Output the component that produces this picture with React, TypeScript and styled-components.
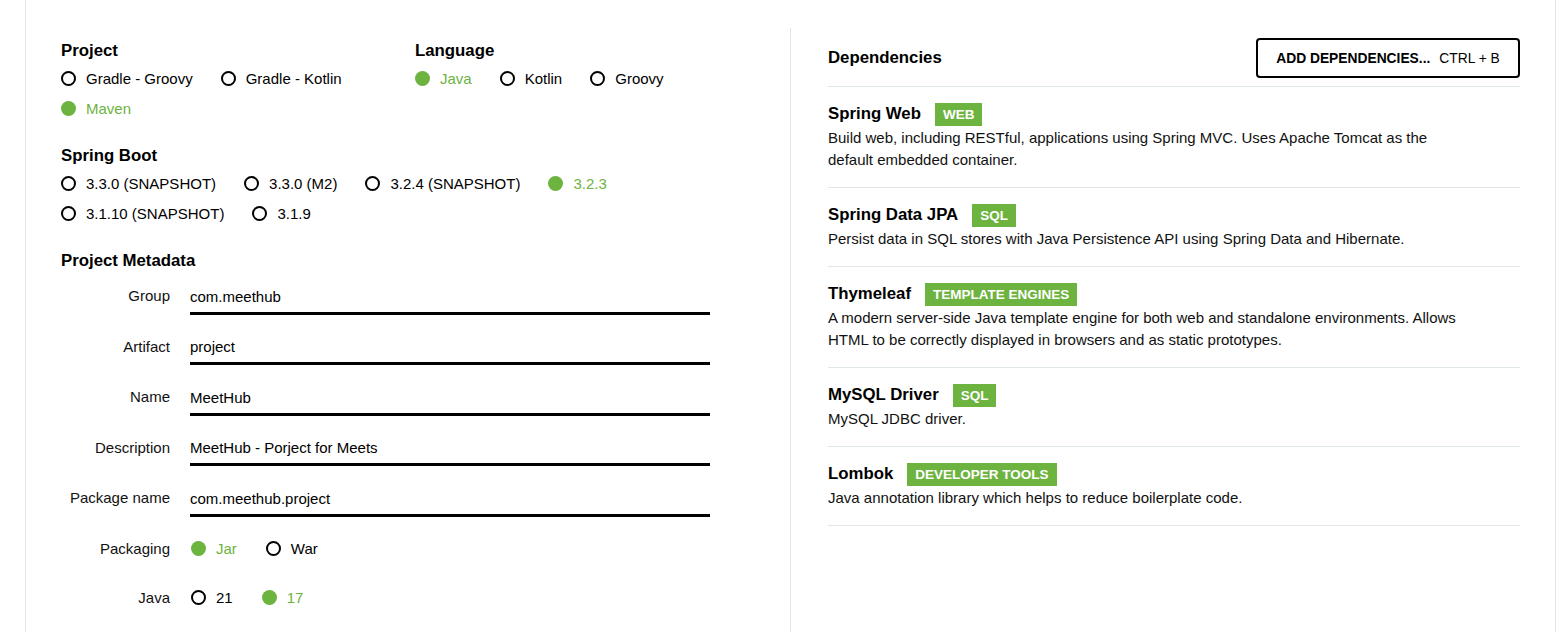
import React from 'react'
import styled, { createGlobalStyle } from 'styled-components'

const GREEN = '#6db33f'
const LINE = '#dfe7e8'

const GlobalStyle = createGlobalStyle`
    body {
        margin: 0;
        background: #fff;
        color: #000;
        font-family: "Liberation Sans", Arial, sans-serif;
    }
`

type Opt = { label: string; checked?: boolean }

const Radio: React.FC<Opt> = ({ label, checked }) => (
    <Option $checked={!!checked}>
        <Dot $checked={!!checked} />
        {label}
    </Option>
)

const RadioGroup: React.FC<{ options: Opt[] }> = ({ options }) => (
    <Options>
        {options.map(o => <Radio key={o.label} {...o} />)}
    </Options>
)

const deps = [
    { name: 'Spring Web', tag: 'WEB', text: 'Build web, including RESTful, applications using Spring MVC. Uses Apache Tomcat as the default embedded container.' },
    { name: 'Spring Data JPA', tag: 'SQL', text: 'Persist data in SQL stores with Java Persistence API using Spring Data and Hibernate.' },
    { name: 'Thymeleaf', tag: 'TEMPLATE ENGINES', text: 'A modern server-side Java template engine for both web and standalone environments. Allows HTML to be correctly displayed in browsers and as static prototypes.' },
    { name: 'MySQL Driver', tag: 'SQL', text: 'MySQL JDBC driver.' },
    { name: 'Lombok', tag: 'DEVELOPER TOOLS', text: 'Java annotation library which helps to reduce boilerplate code.' },
]

const fields = [
    ['Group', 'com.meethub'],
    ['Artifact', 'project'],
    ['Name', 'MeetHub'],
    ['Description', 'MeetHub - Porject for Meets'],
    ['Package name', 'com.meethub.project'],
]

const App: React.FC = () => {
    return (
        <>
            <GlobalStyle />
            <Page>
                <Columns>
                    <LeftCol>
                        <TopRow>
                            <ProjectBlock>
                                <Heading>Project</Heading>
                                <RadioGroup options={[
                                    { label: 'Gradle - Groovy' },
                                    { label: 'Gradle - Kotlin' },
                                    { label: 'Maven', checked: true },
                                ]} />
                            </ProjectBlock>
                            <LanguageBlock>
                                <Heading>Language</Heading>
                                <RadioGroup options={[
                                    { label: 'Java', checked: true },
                                    { label: 'Kotlin' },
                                    { label: 'Groovy' },
                                ]} />
                            </LanguageBlock>
                        </TopRow>

                        <Section>
                            <Heading>Spring Boot</Heading>
                            <RadioGroup options={[
                                { label: '3.3.0 (SNAPSHOT)' },
                                { label: '3.3.0 (M2)' },
                                { label: '3.2.4 (SNAPSHOT)' },
                                { label: '3.2.3', checked: true },
                                { label: '3.1.10 (SNAPSHOT)' },
                                { label: '3.1.9' },
                            ]} />
                        </Section>

                        <Section>
                            <Heading $gap={9}>Project Metadata</Heading>
                            <MetaGrid>
                                {fields.map(([label, value]) => (
                                    <React.Fragment key={label}>
                                        <FieldLabel>{label}</FieldLabel>
                                        <TextInput defaultValue={value} />
                                    </React.Fragment>
                                ))}
                                <FieldLabel $center>Packaging</FieldLabel>
                                <InlineOptions>
                                    <Radio label="Jar" checked />
                                    <Radio label="War" />
                                </InlineOptions>
                                <FieldLabel $center>Java</FieldLabel>
                                <InlineOptions>
                                    <Radio label="21" />
                                    <Radio label="17" checked />
                                </InlineOptions>
                            </MetaGrid>
                        </Section>
                    </LeftCol>

                    <RightCol>
                        <DepsHeader>
                            <Heading $gap={0}>Dependencies</Heading>
                            <AddButton>
                                <strong>ADD DEPENDENCIES...</strong>
                                <span>CTRL + B</span>
                            </AddButton>
                        </DepsHeader>
                        {deps.map(d => (
                            <DepItem key={d.name}>
                                <DepTitle>
                                    {d.name}
                                    <Badge>{d.tag}</Badge>
                                </DepTitle>
                                <DepText>{d.text}</DepText>
                            </DepItem>
                        ))}
                    </RightCol>
                </Columns>
            </Page>
        </>
    )
}

const Page = styled.div`
    margin-left: 25px;
    min-height: 100vh;
    box-sizing: border-box;
    padding-top: 28px;
    border-left: 1px solid ${LINE};
    border-right: 1px solid ${LINE};
`

const Columns = styled.div`
    display: grid;
    grid-template-columns: 764px 1fr;
    min-height: calc(100vh - 28px);
`

const LeftCol = styled.div`
    padding: 13px 0 0 35px;
    width: 649px;
`

const RightCol = styled.div`
    border-left: 1px solid ${LINE};
    padding: 10px 35px 0 37px;
`

const TopRow = styled.div`
    display: flex;
`

const ProjectBlock = styled.div`
    flex: 0 0 354px;
`

const LanguageBlock = styled.div`
    flex: 1;
`

const Section = styled.div`
    margin-top: 23px;
`

const Heading = styled.div<{ $gap?: number }>`
    font-size: 16.8px;
    font-weight: bold;
    line-height: 20px;
    margin-bottom: ${p => (p.$gap ?? 2)}px;
`

const Options = styled.div`
    display: flex;
    flex-wrap: wrap;
    column-gap: 28px;
`

const InlineOptions = styled.div`
    display: flex;
    column-gap: 29px;
    height: 32px;
    margin-top: 1px;
    padding-left: 1px;
`

const Option = styled.label<{ $checked: boolean }>`
    display: flex;
    align-items: center;
    height: 30px;
    font-size: 15px;
    color: ${p => (p.$checked ? GREEN : '#000')};
    cursor: pointer;
`

const Dot = styled.span<{ $checked: boolean }>`
    width: 15px;
    height: 15px;
    box-sizing: border-box;
    border-radius: 50%;
    margin-right: 10px;
    border: ${p => (p.$checked ? 'none' : '2px solid #000')};
    background: ${p => (p.$checked ? GREEN : '#fff')};
`

const MetaGrid = styled.div`
    display: grid;
    grid-template-columns: 109px 520px;
    column-gap: 20px;
    row-gap: 16px;
    align-items: start;
`

const FieldLabel = styled.div<{ $center?: boolean }>`
    text-align: right;
    font-size: 15px;
    line-height: 20px;
    color: #111;
    padding-top: ${p => (p.$center ? '0' : '6px')};
    align-self: ${p => (p.$center ? 'center' : 'start')};
`

const TextInput = styled.input`
    display: block;
    width: 100%;
    height: 34.5px;
    box-sizing: border-box;
    border: none;
    border-bottom: 3px solid #000;
    padding: 6px 0 5.5px;
    margin: 0;
    font-family: inherit;
    font-size: 15px;
    line-height: 20px;
    color: #000;
    background: transparent;
    outline: none;
`

const DepsHeader = styled.div`
    display: flex;
    align-items: center;
    justify-content: space-between;
    height: 40px;
    padding-bottom: 8px;
    border-bottom: 1px solid ${LINE};
`

const AddButton = styled.button`
    display: flex;
    align-items: center;
    gap: 9px;
    height: 40px;
    width: 264px;
    box-sizing: border-box;
    justify-content: center;
    padding: 0 18px;
    background: #fff;
    border: 2px solid #000;
    border-radius: 4px;
    font-family: inherit;
    font-size: 13.8px;
    color: #000;
    cursor: pointer;
`

const DepItem = styled.div`
    padding: 16px 0 16px;
    border-bottom: 1px solid ${LINE};
`

const DepTitle = styled.div`
    display: flex;
    align-items: center;
    gap: 14px;
    height: 22px;
    font-size: 16.8px;
    font-weight: bold;
`

const Badge = styled.span`
    display: inline-flex;
    align-items: center;
    height: 23px;
    padding: 0 8px;
    background: ${GREEN};
    color: #fff;
    font-size: 13.5px;
    font-weight: bold;
`

const DepText = styled.div`
    margin-top: 2px;
    max-width: 636px;
    font-size: 15px;
    line-height: 22px;
    color: #111;
`

export default App
